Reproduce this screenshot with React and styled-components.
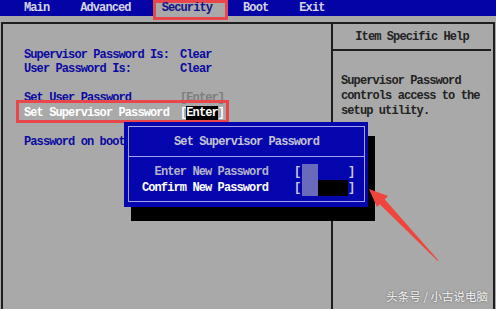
import React from "react";
import styled, {createGlobalStyle} from "styled-components";

const GlobalStyle = createGlobalStyle`
    html, body {
        margin: 0;
        padding: 0;
        background: #a9a9a9;
    }
    body {
        font-family: "Liberation Mono", "DejaVu Sans Mono", monospace;
        font-weight: 700;
        font-size: 12px;
        letter-spacing: -0.9px;
    }
`;

const Screen = styled.div`
    position: relative;
    width: 496px;
    height: 309px;
    overflow: hidden;
    background: #a9a9a9;
`;

const MenuBar = styled.nav`
    position: relative;
    z-index: 0;
    height: 16px;
    display: flex;
    align-items: center;
    gap: 15px;
    padding-left: 16px;
    background: #0404a6;
`;

const MenuItem = styled.span`
    position: relative;
    padding: 1px 8px 0;
    line-height: 17px;
    color: ${p => p.$active ? "#14148a" : "#d4d4e4"};

    ${p => p.$active && `
        &::before {
            content: "";
            position: absolute;
            top: 1px;
            bottom: -3px;
            left: -1px;
            right: -8px;
            background: #a9a9a9;
            border: 3px solid #e8464a;
            z-index: -1;
        }
    `}
`;

const Frame = styled.div`
    margin: 6px 1px 0 1px;
    height: 300px;
    border: 2px solid #1e1e1e;
    border-bottom: none;
    display: grid;
    grid-template-columns: 330px 158px;
`;

const LeftPanel = styled.section`
    padding: 23.5px 0 0 21px;
    border-right: 2px solid #1e1e1e;
`;

const Group = styled.div`
    margin-bottom: 14.6px;
`;

const Row = styled.div`
    position: relative;
    display: flex;
    width: fit-content;
    line-height: 14.6px;
    color: ${p => p.$selected ? "#ffffff" : "#0a0aa0"};

    ${p => p.$selected && `
        &::after {
            content: "";
            position: absolute;
            top: -6px;
            bottom: -3px;
            left: -8px;
            right: -5px;
            border: 3px solid #e8464a;
        }
    `}
`;

const Label = styled.span`
    width: 156px;
`;

const Value = styled.span`
    color: ${p => p.$muted ? "#7e7e7e" : "inherit"};
`;

const Cursor = styled.span`
    background: #000;
    color: #fff;
`;

const HelpPanel = styled.aside`
    display: flex;
    flex-direction: column;
    color: #222;
`;

const HelpTitle = styled.div`
    height: 27px;
    padding-top: 1px;
    box-sizing: border-box;
    display: flex;
    align-items: center;
    justify-content: center;
    border-bottom: 2px solid #1e1e1e;
`;

const HelpText = styled.p`
    margin: 0;
    padding: 23px 4px 0 8px;
    line-height: 15px;
`;

const Dialog = styled.div`
    position: absolute;
    left: 124px;
    top: 122px;
    width: 244px;
    height: 85px;
    box-sizing: border-box;
    padding: 4px 3px 5px 4px;
    background: #0606ae;
    box-shadow: 7px 14px 0 #000;
`;

const DialogInner = styled.div`
    height: 100%;
    box-sizing: border-box;
    border: 1px solid #a4a4ee;
`;

const DialogTitle = styled.div`
    height: 30px;
    padding-top: 1px;
    box-sizing: border-box;
    display: flex;
    align-items: center;
    justify-content: center;
    border-bottom: 1px solid #a4a4ee;
    color: #c4c4d4;
`;

const DialogBody = styled.div`
    padding-top: 7px;
    display: grid;
    grid-template-columns: 139px auto;
    column-gap: 26px;
    line-height: 15px;
`;

const FieldLabel = styled.span`
    text-align: right;
    padding-top: 1px;
    color: ${p => p.$active ? "#ffffff" : "#b4b4cc"};
`;

const Field = styled.span`
    display: flex;
    color: #c8c8dc;
`;

const Bracket = styled.span`
    width: ${p => p.$w}px;
    padding-top: 1px;
    text-align: ${p => p.$align};
`;

const FieldBox = styled.span`
    display: flex;
    width: 46px;
`;

const Fill = styled.span`
    width: ${p => p.$w}px;
    background: ${p => p.$color};
`;

const Watermark = styled.div`
    position: absolute;
    right: 8px;
    bottom: 5px;
    font-family: "Noto Sans CJK SC", sans-serif;
    font-weight: 400;
    font-size: 11.5px;
    letter-spacing: 0;
    color: #f4f4f4;
    text-shadow: 0 0 2px rgba(0, 0, 0, 0.55);
`;

const ArrowSvg = styled.svg`
    position: absolute;
    left: 360px;
    top: 180px;
`;

const Arrow = () => (
    <ArrowSvg width="90" height="90" viewBox="0 0 90 90">
        <polygon points="9,9 28,16 17,27" fill="#f0443c"/>
        <polygon points="19,23.5 24,18.5 78.5,80.5 77.8,81" fill="#f0443c"/>
    </ArrowSvg>
);

const PasswordField = ({confirm}) => (
    <Field>
        <Bracket $w={8} $align="left">[</Bracket>
        <FieldBox>
            <Fill $w={16} $color="#6a6abc"/>
            <Fill $w={30} $color={confirm ? "#000" : "transparent"}/>
        </FieldBox>
        <Bracket $w={6} $align="right">]</Bracket>
    </Field>
);

export default function App() {
    return (
        <Screen>
            <GlobalStyle/>
            <MenuBar>
                <MenuItem>Main</MenuItem>
                <MenuItem>Advanced</MenuItem>
                <MenuItem $active>Security</MenuItem>
                <MenuItem>Boot</MenuItem>
                <MenuItem>Exit</MenuItem>
            </MenuBar>
            <Frame>
                <LeftPanel>
                    <Group>
                        <Row><Label>Supervisor Password Is:</Label><Value>Clear</Value></Row>
                        <Row><Label>User Password Is:</Label><Value>Clear</Value></Row>
                    </Group>
                    <Group>
                        <Row><Label>Set User Password</Label><Value $muted>[Enter]</Value></Row>
                        <Row $selected>
                            <Label>Set Supervisor Password</Label>
                            <Value>[<Cursor>Enter</Cursor>]</Value>
                        </Row>
                    </Group>
                    <Row><Label>Password on boot</Label></Row>
                </LeftPanel>
                <HelpPanel>
                    <HelpTitle>Item Specific Help</HelpTitle>
                    <HelpText>
                        Supervisor Password<br/>
                        controls access to the<br/>
                        setup utility.
                    </HelpText>
                </HelpPanel>
            </Frame>
            <Dialog>
                <DialogInner>
                    <DialogTitle>Set Supervisor Password</DialogTitle>
                    <DialogBody>
                        <FieldLabel>Enter New Password</FieldLabel>
                        <PasswordField/>
                        <FieldLabel $active>Confirm New Password</FieldLabel>
                        <PasswordField confirm/>
                    </DialogBody>
                </DialogInner>
            </Dialog>
            <Arrow/>
            <Watermark>头条号 / 小古说电脑</Watermark>
        </Screen>
    );
}
